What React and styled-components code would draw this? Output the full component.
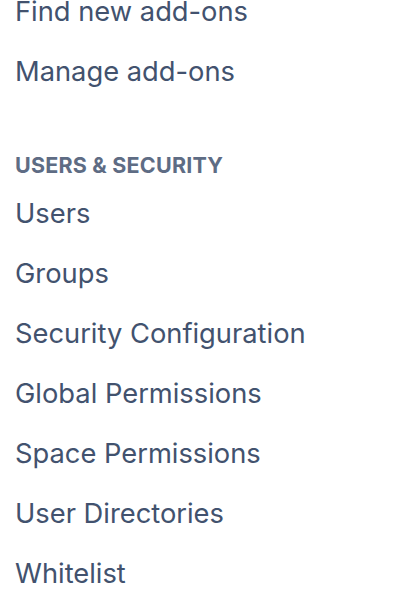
import React from "react";
import styled, { createGlobalStyle } from "styled-components";

const Global = createGlobalStyle`
  html, body { margin: 0; padding: 0; background: #ffffff; }
  body { font-family: Inter, "Noto Sans", sans-serif; overflow: hidden; }
`;

const Nav = styled.nav`
  display: flex;
  flex-direction: column;
  margin-top: -18px;
  padding-left: 15px;
`;

const Section = styled.div`
  display: flex;
  flex-direction: column;
  margin-top: ${(p) => p.$gap || 0}px;
`;

const Heading = styled.h3`
  margin: 0;
  font-size: 21.5px;
  font-weight: 700;
  line-height: 38px;
  color: #5e6c84;
  letter-spacing: 0.2px;
`;

const Item = styled.a`
  display: block;
  font-size: 27.3px;
  line-height: 60px;
  height: 60px;
  color: #42526e;
  text-decoration: none;
  white-space: nowrap;
`;

const addons = ["Find new add-ons", "Manage add-ons"];
const users = [
  "Users",
  "Groups",
  "Security Configuration",
  "Global Permissions",
  "Space Permissions",
  "User Directories",
  "Whitelist",
];

export default function App() {
  return (
    <>
      <Global />
      <Nav>
        <Section>
          {addons.map((t) => (
            <Item key={t} href="#">{t}</Item>
          ))}
        </Section>
        <Section $gap={44}>
          <Heading>USERS &amp; SECURITY</Heading>
          {users.map((t) => (
            <Item key={t} href="#">{t}</Item>
          ))}
        </Section>
      </Nav>
    </>
  );
}
